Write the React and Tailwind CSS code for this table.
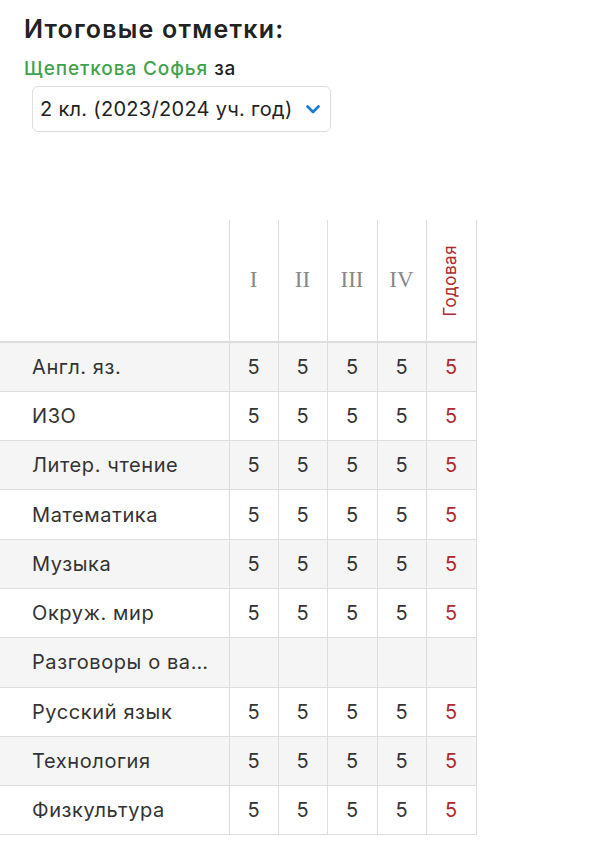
import React from 'react';

const subjects = [
  { name: 'Англ. яз.', marks: ['5', '5', '5', '5'], year: '5' },
  { name: 'ИЗО', marks: ['5', '5', '5', '5'], year: '5' },
  { name: 'Литер. чтение', marks: ['5', '5', '5', '5'], year: '5' },
  { name: 'Математика', marks: ['5', '5', '5', '5'], year: '5' },
  { name: 'Музыка', marks: ['5', '5', '5', '5'], year: '5' },
  { name: 'Окруж. мир', marks: ['5', '5', '5', '5'], year: '5' },
  { name: 'Разговоры о важном', marks: ['', '', '', ''], year: '' },
  { name: 'Русский язык', marks: ['5', '5', '5', '5'], year: '5' },
  { name: 'Технология', marks: ['5', '5', '5', '5'], year: '5' },
  { name: 'Физкультура', marks: ['5', '5', '5', '5'], year: '5' },
];

const periods = ['I', 'II', 'III', 'IV'];

const App = () => {
  return (
    <div className="min-h-screen bg-white font-['Inter','Noto_Sans',sans-serif] text-[#222]">
      <div className="px-6 pt-[12px]">
        <h1 className="text-[25px] leading-[34px] font-semibold tracking-[1.2px] text-[#222]">Итоговые отметки:</h1>
        <div className="mt-[12px] text-[19px] leading-[22px] font-medium tracking-[0.9px]">
          <span className="text-[#3fa34d]">Щепеткова Софья</span> <span className="text-[#222]">за</span>
        </div>
        <div className="mt-[6px] ml-2 flex h-[46px] w-[299px] items-center justify-between rounded-md border border-[#ddd] pl-[7px] pr-[9px]">
          <span className="text-[20px] tracking-[0.3px] text-[#222] whitespace-nowrap">2 кл. (2023/2024 уч. год)</span>
          <svg width="16" height="11" viewBox="0 0 16 11" className="shrink-0">
            <path d="M2.5 2.5 L8 8 L13.5 2.5" fill="none" stroke="#1a7fd1" strokeWidth="2.8" strokeLinecap="round" strokeLinejoin="round" />
          </svg>
        </div>
      </div>

      <table className="mt-[88px] border-collapse table-fixed w-[476px]">
        <colgroup>
          <col className="w-[229px]" />
          <col className="w-[49px]" />
          <col className="w-[49px]" />
          <col className="w-[50px]" />
          <col className="w-[49px]" />
          <col className="w-[50px]" />
        </colgroup>
        <thead>
          <tr className="h-[122px] border-b-2 border-[#ddd]">
            <th></th>
            {periods.map((p) => (
              <th key={p} className="border-l border-r border-[#ddd] text-center font-normal text-[23px] text-[#888] font-['Liberation_Serif',serif]">
                {p}
              </th>
            ))}
            <th className="border-l border-r border-[#ddd] align-middle">
              <div className="flex h-[120px] items-center justify-center">
                <span className="block -rotate-90 whitespace-nowrap text-[17px] tracking-[0.5px] font-normal text-[#b0282c]">Годовая</span>
              </div>
            </th>
          </tr>
        </thead>
        <tbody>
          {subjects.map((s, i) => (
            <tr key={s.name} className={`h-[49.3px] border-b border-[#ddd] ${i % 2 === 0 ? 'bg-[#f5f5f5]' : 'bg-white'}`}>
              <td className="pl-8 pr-2 text-[20px] tracking-[0.6px] text-[#333] truncate">{s.name}</td>
              {s.marks.map((m, j) => (
                <td key={j} className="border-l border-r border-[#ddd] text-center text-[20px] text-[#333]">{m}</td>
              ))}
              <td className="border-l border-r border-[#ddd] text-center text-[20px] text-[#b0282c]">{s.year}</td>
            </tr>
          ))}
        </tbody>
      </table>
    </div>
  );
};

export default App;
